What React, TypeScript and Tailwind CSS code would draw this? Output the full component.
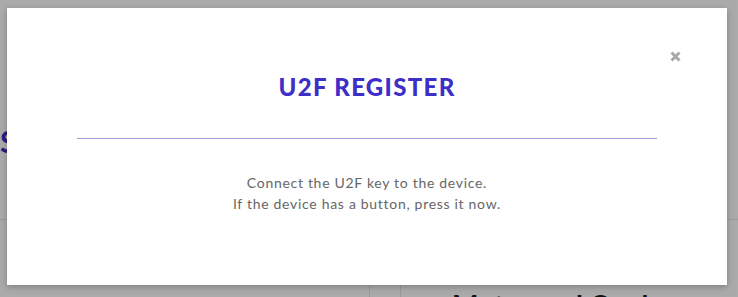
import React from "react";

export default function App() {
  return (
    <div className="relative w-[738px] h-[297px] overflow-hidden bg-white" style={{ fontFamily: "Lato, 'Noto Sans', sans-serif" }}>
      {/* page behind the overlay */}
      <div className="flex flex-col w-full h-full">
        <div className="h-[220px] shrink-0 border-b border-[#e6e6e6] pt-[126px]">
          <h2 className="text-[30px] font-bold leading-none text-[#3d2ec8]">S</h2>
        </div>
        <div className="flex flex-1 min-h-0 overflow-hidden">
          <div className="w-[370px] shrink-0 border-r border-[#e6e6e6]" />
          <div className="w-[31px] shrink-0 border-r border-[#e6e6e6]" />
          <div className="pl-[51px] pt-[71px] text-[28px] font-bold leading-none text-[#1a1a1a] whitespace-nowrap">Motor and Cards</div>
        </div>
      </div>

      {/* overlay with modal */}
      <div className="absolute inset-0 bg-[rgba(0,0,0,0.333)] pt-[8px] pl-[7px]">
        <div className="relative w-[720px] h-[277px] bg-white shadow-[0_2px_6px_rgba(0,0,0,0.25)] flex flex-col items-center">
          <button className="absolute left-[661px] top-[41px] w-[14px] h-[14px] flex items-center justify-center text-[#a8a8a8]">
            <svg width="11" height="11" viewBox="0 0 11 11">
              <path d="M1.5 1.5 L9.5 9.5 M9.5 1.5 L1.5 9.5" stroke="currentColor" strokeWidth="3" strokeLinecap="butt" />
            </svg>
          </button>
          <h1 className="mt-[64px] text-[24px] leading-[30px] font-black tracking-[0.055em] text-[#3d2ec8]">U2F REGISTER</h1>
          <div className="mt-[36px] w-[580px] h-px bg-[#a49ad9]" />
          <div className="mt-[33px] text-[14px] leading-[21px] tracking-[0.05em] text-[#666666] text-center">
            <p>Connect the U2F key to the device.</p>
            <p>If the device has a button, press it now.</p>
          </div>
        </div>
      </div>
    </div>
  );
}
